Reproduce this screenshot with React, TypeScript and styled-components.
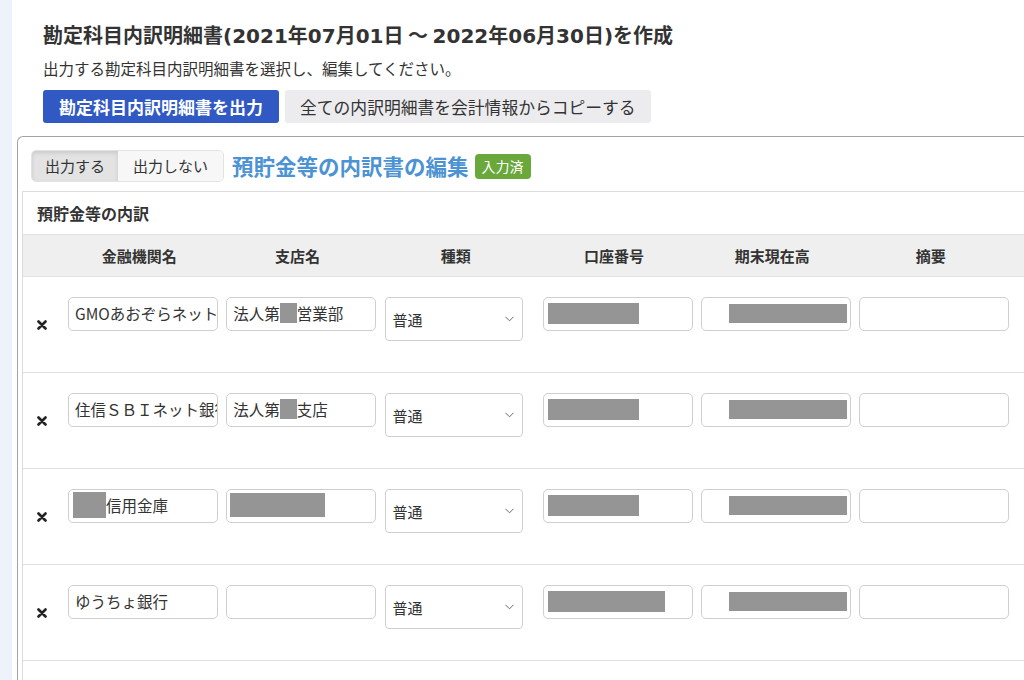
import React, { FC } from "react";
import styled, { createGlobalStyle } from "styled-components";

const GlobalStyle = createGlobalStyle`
  html, body {
    margin: 0;
    padding: 0;
    background: #edf2fb;
    overflow: hidden;
  }
  body {
    font-family: "Noto Sans CJK JP", "Noto Sans", sans-serif;
    color: #333;
  }
`;

const Page = styled.div`
  display: flex;
  height: 680px;
  background: #edf2fb;
  overflow: hidden;
`;

const Main = styled.main`
  flex: 1;
  min-width: 0;
  margin-left: 12px;
  padding-left: 5px;
  background: #fff;
`;

const Head = styled.header`
  padding: 21px 0 0 26px;
`;

const Title = styled.h1`
  margin: 0;
  font-size: 20px;
  line-height: 28px;
  font-weight: 700;
  color: #333;
  white-space: nowrap;
  .num {
    font-family: "DejaVu Sans", "Noto Sans CJK JP", sans-serif;
    font-size: 20px;
  }
`;

const Lead = styled.p`
  margin: 7px 0 0;
  font-size: 15.5px;
  line-height: 22px;
  color: #333;
`;

const Actions = styled.div`
  display: flex;
  gap: 6px;
  margin-top: 11px;
`;

const Button = styled.button<{ $primary?: boolean }>`
  height: 33px;
  padding: 0 ${(p) => (p.$primary ? 16 : 15)}px;
  border: none;
  border-radius: 3px;
  font-family: inherit;
  font-size: ${(p) => (p.$primary ? 17 : 16.8)}px;
  font-weight: ${(p) => (p.$primary ? 700 : 400)};
  color: ${(p) => (p.$primary ? "#fff" : "#333")};
  background: ${(p) => (p.$primary ? "#3059c4" : "#ececef")};
`;

const Card = styled.section`
  margin-top: 13px;
  width: 1060px;
  height: 560px;
  border: 1px solid #a3a3a3;
  border-right: none;
  border-bottom: none;
  border-radius: 6px 0 0 0;
  overflow: hidden;
`;

const CardHead = styled.div`
  display: flex;
  align-items: center;
  padding: 13px 0 9px 13px;
`;

const Toggle = styled.div`
  display: flex;
  border: 1px solid #e3e3e3;
  border-radius: 5px;
  overflow: hidden;
`;

const ToggleItem = styled.div<{ $active?: boolean }>`
  height: 30px;
  line-height: 30px;
  padding: 0 ${(p) => (p.$active ? 13 : 15)}px;
  font-size: 15px;
  color: #333;
  background: ${(p) => (p.$active ? "#e3e3e3" : "#f7f7f7")};
  box-shadow: ${(p) => (p.$active ? "inset 0 2px 4px rgba(0,0,0,0.12)" : "none")};
`;

const EditTitle = styled.h2`
  margin: 0 0 0 8px;
  font-size: 21.5px;
  font-weight: 700;
  color: #4b93d3;
  line-height: 30px;
`;

const Badge = styled.span`
  margin-left: 6px;
  height: 25px;
  line-height: 25px;
  padding: 0 7px;
  border-radius: 4px;
  background: #6aa83c;
  color: #fff;
  font-size: 14px;
`;

const Panel = styled.div`
  height: 100%;
  margin-left: 4px;
  border-left: 1px solid #dcdcdc;
  border-top: 1px solid #dcdcdc;
`;

const PanelTitle = styled.div`
  height: 42px;
  display: flex;
  align-items: center;
  padding-left: 14px;
  font-size: 16px;
  font-weight: 700;
  color: #333;
`;

const cols = "37px repeat(6, 158.3px) 1fr";

const HeadRow = styled.div`
  display: grid;
  grid-template-columns: ${cols};
  height: 41px;
  background: #efefef;
  border-top: 1px solid #e2e2e2;
  border-bottom: 1px solid #e2e2e2;
`;

const HeadCell = styled.div`
  display: flex;
  align-items: center;
  justify-content: center;
  font-size: 15px;
  font-weight: 700;
  color: #333;
`;

const Row = styled.div`
  display: grid;
  grid-template-columns: ${cols};
  height: 95px;
  border-bottom: 1px solid #dedede;
`;

const RemoveCell = styled.div`
  display: flex;
  align-items: center;
  justify-content: center;
  padding-left: 1px;
`;

const Cell = styled.div`
  padding: 20px 0 0 8px;
`;

const Field = styled.div<{ $end?: boolean; $pad?: number }>`
  box-sizing: border-box;
  width: 150px;
  height: 34px;
  display: flex;
  align-items: center;
  justify-content: ${(p) => (p.$end ? "flex-end" : "flex-start")};
  padding: 0 ${(p) => (p.$end ? 3 : p.$pad ?? 6)}px 2px ${(p) => p.$pad ?? 6}px;
  border: 1px solid #cfcfcf;
  border-radius: 5px;
  background: #fff;
  font-size: 15.5px;
  color: #333;
  white-space: nowrap;
  overflow: hidden;
`;

const Select = styled.div`
  box-sizing: border-box;
  width: 138px;
  height: 44px;
  display: flex;
  align-items: center;
  justify-content: space-between;
  padding: 0 8px 0 7px;
  border: 1px solid #cfcfcf;
  border-radius: 4px;
  background: #fff;
  font-size: 15px;
  color: #333;
`;

const Redact = styled.span<{ $w: number; $h: number }>`
  display: inline-block;
  flex: none;
  width: ${(p) => p.$w}px;
  height: ${(p) => p.$h}px;
  background: #959595;
`;

const Cross: FC = () => (
  <svg width="10" height="10" viewBox="0 0 10 10">
    <path d="M1.5 1.5 L8.5 8.5 M8.5 1.5 L1.5 8.5" stroke="#222" strokeWidth="2.6" strokeLinecap="round" />
  </svg>
);

const Chevron: FC = () => (
  <svg width="9" height="6" viewBox="0 0 9 6">
    <path d="M0.5 0.8 L4.5 4.8 L8.5 0.8" fill="none" stroke="#666" strokeWidth="1" />
  </svg>
);

type Bank = {
  name: React.ReactNode;
  branch: React.ReactNode;
  account: number;
};

const rows: Bank[] = [
  {
    name: "GMOあおぞらネット銀行",
    branch: (
      <>
        法人第<Redact $w={17} $h={20} />営業部
      </>
    ),
    account: 91,
  },
  {
    name: "住信ＳＢＩネット銀行",
    branch: (
      <>
        法人第<Redact $w={17} $h={20} />支店
      </>
    ),
    account: 91,
  },
  {
    name: (
      <>
        <Redact $w={33} $h={26} style={{ marginLeft: -2 }} />
        信用金庫
      </>
    ),
    branch: <Redact $w={95} $h={24} style={{ marginLeft: -3 }} />,
    account: 91,
  },
  { name: "ゆうちょ銀行", branch: "", account: 117 },
];

const headers = ["金融機関名", "支店名", "種類", "口座番号", "期末現在高", "摘要"];

const App: FC = () => {
  return (
    <Page>
      <GlobalStyle />
      <Main>
        <Head>
          <Title>
            勘定科目内訳明細書<span className="num">(2021</span>年<span className="num">07</span>月
            <span className="num">01</span>日 〜 <span className="num">2022</span>年
            <span className="num">06</span>月<span className="num">30</span>日<span className="num">)</span>を作成
          </Title>
          <Lead>出力する勘定科目内訳明細書を選択し、編集してください。</Lead>
          <Actions>
            <Button $primary>勘定科目内訳明細書を出力</Button>
            <Button>全ての内訳明細書を会計情報からコピーする</Button>
          </Actions>
        </Head>
        <Card>
          <CardHead>
            <Toggle>
              <ToggleItem $active>出力する</ToggleItem>
              <ToggleItem>出力しない</ToggleItem>
            </Toggle>
            <EditTitle>預貯金等の内訳書の編集</EditTitle>
            <Badge>入力済</Badge>
          </CardHead>
          <Panel>
            <PanelTitle>預貯金等の内訳</PanelTitle>
            <HeadRow>
              <HeadCell />
              {headers.map((h) => (
                <HeadCell key={h}>{h}</HeadCell>
              ))}
              <HeadCell />
            </HeadRow>
            {rows.map((r, i) => (
              <Row key={i}>
                <RemoveCell>
                  <Cross />
                </RemoveCell>
                <Cell>
                  <Field>{r.name}</Field>
                </Cell>
                <Cell>
                  <Field>{r.branch}</Field>
                </Cell>
                <Cell>
                  <Select>
                    普通
                    <Chevron />
                  </Select>
                </Cell>
                <Cell>
                  <Field $pad={4}>{r.account > 0 && <Redact $w={r.account} $h={21} />}</Field>
                </Cell>
                <Cell>
                  <Field $end>{r.account > 0 && <Redact $w={118} $h={19} />}</Field>
                </Cell>
                <Cell>
                  <Field />
                </Cell>
                <Cell />
              </Row>
            ))}
          </Panel>
        </Card>
      </Main>
    </Page>
  );
};

export default App;
